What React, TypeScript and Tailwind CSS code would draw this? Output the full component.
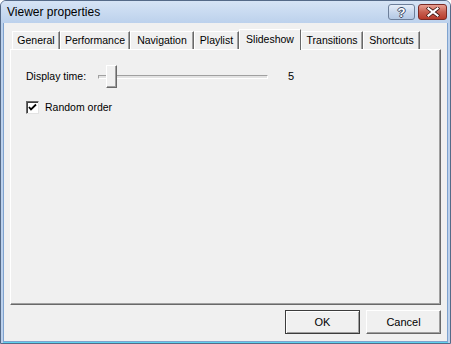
import React from 'react';

const tabs = [
  { label: 'General', w: 'w-[48px]' },
  { label: 'Performance', w: 'w-[70px]' },
  { label: 'Navigation', w: 'w-[64px]' },
  { label: 'Playlist', w: 'w-[45px]' },
  { label: 'Slideshow', w: 'w-[62px]', active: true },
  { label: 'Transitions', w: 'w-[62px]' },
  { label: 'Shortcuts', w: 'w-[57px]' },
];

const font = { fontFamily: '"Liberation Sans", Arial, sans-serif' };

const TitleButtons: React.FC = () => (
  <div className="flex items-start gap-[3px] pt-[3px] pr-[3px]">
    <div className="w-[27px] h-[16px] rounded-[3px] border border-[#6d7f9a] bg-gradient-to-b from-[#e6eef9] via-[#c9d8ed] to-[#b3c8e4] flex items-center justify-center">
      <span
        className="text-[13px] font-bold leading-none text-white [text-shadow:1px_0_0_#3b4b66,-1px_0_0_#3b4b66,0_1px_0_#3b4b66,0_-1px_0_#3b4b66]"
        style={font}
      >
        ?
      </span>
    </div>
    <div className="w-[29px] h-[16px] rounded-[3px] border border-[#7a2a24] bg-gradient-to-b from-[#e8a093] via-[#c75f50] to-[#b83a2a] flex items-center justify-center">
      <svg width="14" height="10" viewBox="0 0 14 10">
        <path d="M2.5 1.5 L11.5 8.5 M11.5 1.5 L2.5 8.5" stroke="#3a1410" strokeWidth="3.6" strokeLinecap="square" />
        <path d="M2.5 1.5 L11.5 8.5 M11.5 1.5 L2.5 8.5" stroke="#ffffff" strokeWidth="2.2" strokeLinecap="square" />
      </svg>
    </div>
  </div>
);

export default function App() {
  return (
    <div
      className="w-[451px] h-[344px] flex flex-col bg-[#bcd1ec] border border-[#556a88] rounded-t-[6px] overflow-hidden text-[10.5px] text-black"
      style={font}
    >
      <div className="h-[22px] flex items-start justify-between bg-gradient-to-b from-[#d6e4f5] to-[#bcd1ec]">
        <span className="pl-[6px] pt-[4px] text-[12px] leading-[14px]">Viewer properties</span>
        <TitleButtons />
      </div>
      <div className="flex-1 mx-[2px] mb-[1px] border-l border-r border-b border-[#7fa3cf] bg-[#f0f0f0] flex flex-col px-[6px] pt-[6px] shadow-[0_1px_0_#5ed2ee]">
        <div className="h-[20px] flex items-end pl-[2px]">
          {tabs.map((t) =>
            t.active ? (
              <div
                key={t.label}
                className={`${t.w} h-[21px] -mb-[1px] relative z-10 bg-[#f0f0f0] border-t border-l border-white border-r border-r-[#696969] flex items-start justify-center pt-[2px]`}
              >
                {t.label}
              </div>
            ) : (
              <div
                key={t.label}
                className={`${t.w} h-[18px] bg-[#f0f0f0] border-t border-l border-white border-r border-r-[#696969] shadow-[inset_-1px_0_0_#a0a0a0] flex items-center justify-center pt-[1px]`}
              >
                {t.label}
              </div>
            )
          )}
        </div>
        <div className="h-[256px] border-t border-l border-white border-r border-b border-r-[#696969] border-b-[#696969] shadow-[inset_-1px_-1px_0_#a0a0a0] pl-[15px] pt-[15px] flex flex-col">
          <div className="flex items-center h-[23px]">
            <span className="w-[72px]">Display time:</span>
            <div className="relative w-[170px] h-[23px] flex items-center">
              <div className="w-full h-[4px] border-t border-l border-[#a0a0a0] border-b border-r border-b-white border-r-white bg-[#e3e3e3]" />
              <div className="absolute left-[8px] top-0 w-[11px] h-[23px] bg-[#f0f0f0] border-t border-l border-white border-r border-b border-r-[#696969] border-b-[#696969] shadow-[inset_-1px_-1px_0_#a0a0a0]" />
            </div>
            <span className="ml-[20px] text-[11px]">5</span>
          </div>
          <div className="flex items-center mt-[12px]">
            <div className="w-[13px] h-[13px] bg-white border border-t-[#696969] border-l-[#696969] border-b-[#e3e3e3] border-r-[#e3e3e3] shadow-[inset_1px_1px_0_#404040] flex items-center justify-center">
              <svg width="9" height="9" viewBox="0 0 9 9">
                <path d="M1 4 L3 6.5 L8 1.5" stroke="#000" strokeWidth="1.8" fill="none" />
              </svg>
            </div>
            <span className="ml-[6px]">Random order</span>
          </div>
        </div>
        <div className="flex justify-end gap-[6px] mt-[5px]">
          <button className="w-[75px] h-[24px] bg-[#f0f0f0] border border-[#3c3c3c] shadow-[inset_1px_1px_0_#ffffff,inset_-1px_-1px_0_#a0a0a0] text-[11px]">
            OK
          </button>
          <button className="w-[75px] h-[24px] bg-[#f0f0f0] border border-t-white border-l-white border-r-[#696969] border-b-[#696969] shadow-[inset_-1px_-1px_0_#a0a0a0] text-[11px]">
            Cancel
          </button>
        </div>
      </div>
    </div>
  );
}
